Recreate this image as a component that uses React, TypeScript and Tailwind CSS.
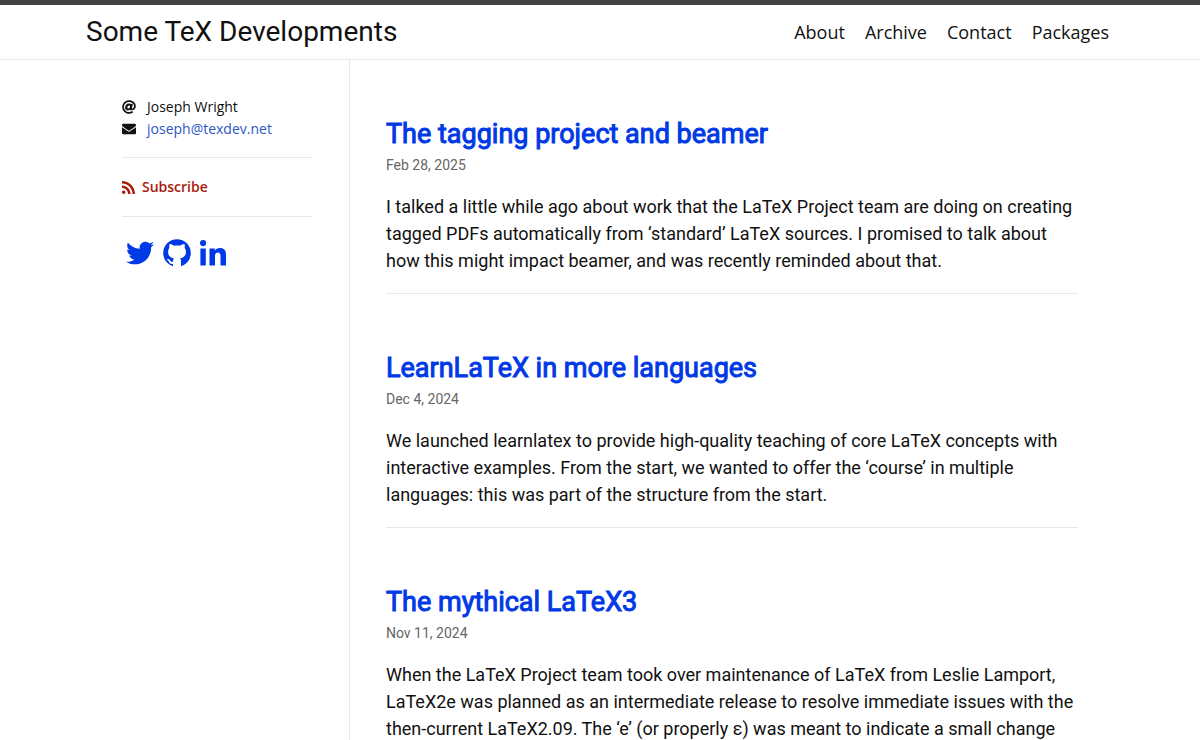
import { FaAt, FaEnvelope, FaTwitter } from 'react-icons/fa';
import { ImRss } from 'react-icons/im';

const navLinks = ['About', 'Archive', 'Contact', 'Packages'];

const posts = [
  {
    title: 'The tagging project and beamer',
    date: 'Feb 28, 2025',
    excerpt:
      'I talked a little while ago about work that the LaTeX Project team are doing on creating tagged PDFs automatically from ‘standard’ LaTeX sources. I promised to talk about how this might impact beamer, and was recently reminded about that.',
  },
  {
    title: 'LearnLaTeX in more languages',
    date: 'Dec 4, 2024',
    excerpt:
      'We launched learnlatex to provide high-quality teaching of core LaTeX concepts with interactive examples. From the start, we wanted to offer the ‘course’ in multiple languages: this was part of the structure from the start.',
  },
  {
    title: 'The mythical LaTeX3',
    date: 'Nov 11, 2024',
    excerpt:
      'When the LaTeX Project team took over maintenance of LaTeX from Leslie Lamport, LaTeX2e was planned as an intermediate release to resolve immediate issues with the then-current LaTeX2.09. The ‘e’ (or properly ε) was meant to indicate a small change',
  },
];

function GithubIcon() {
  return (
    <svg viewBox="0 0 28 28" className="size-7">
      <circle cx="14" cy="14" r="13.8" fill="currentColor" />
      <path
        fill="#fff"
        d="M6.6 5C8.5 4.8 10 6 11 6.8C13 6.3 15 6.3 17 6.8C18 6 19.5 4.8 21.4 5C22 6.5 21.9 7.8 21.6 8.8C22.5 10 22.9 11.3 22.9 12.8C22.9 17.3 20.2 18.9 17 19.3C17.8 20.2 18 21 18 22.3V28H10V25C7 25.5 6.2 23.5 5.5 22C5 21 3.9 20.7 4 20.2C5.5 19.5 6.8 20.8 7.5 21.9C8.2 23 9 23 10.1 22.6C10.2 21 10.3 20 11 19.3C7.8 18.9 5.1 17.3 5.1 12.8C5.1 11.3 5.5 10 6.4 8.8C6.1 7.8 6 6.5 6.6 5z"
      />
    </svg>
  );
}

function LinkedinIcon() {
  return (
    <svg viewBox="0 0 26 26" fill="currentColor" className="size-[26px]">
      <circle cx="3.1" cy="3.1" r="3.1" />
      <rect x="0.4" y="8.5" width="5.4" height="17" />
      <path d="M9.5 8.5h5.3v2.3c1-1.7 2.8-2.7 5.2-2.7 4 0 6 2.6 6 7v10.4h-5.5v-9.7c0-2-.8-3.3-2.6-3.3-1.9 0-2.9 1.4-2.9 3.4v9.6H9.5z" />
    </svg>
  );
}

function Header() {
  return (
    <header className="border-t-5 border-b border-t-[#424242] border-b-[#e8e8e8]">
      <div className="mx-auto flex h-[54px] max-w-[1028px] items-center justify-between">
        <a href="#" className="text-[28px] text-[#111]">Some TeX Developments</a>
        <nav className="flex gap-5 pr-[5px] font-['Open_Sans',sans-serif] text-lg text-[#111]">
          {navLinks.map((label) => (
            <a key={label} href="#">{label}</a>
          ))}
        </nav>
      </div>
    </header>
  );
}

function Sidebar() {
  return (
    <aside className="w-[264px] shrink-0 border-r border-[#e8e8e8] px-9 pt-9 font-['Open_Sans',sans-serif] text-sm">
      <ul className="leading-[22px]">
        <li className="flex items-center gap-[11px]">
          <FaAt className="size-3.5" />
          Joseph Wright
        </li>
        <li className="flex items-center gap-[11px]">
          <FaEnvelope className="size-3.5" />
          <a href="mailto:joseph@texdev.net" className="text-[#2a56c6]">joseph@texdev.net</a>
        </li>
      </ul>
      <hr className="my-[17px] border-[#e8e8e8]" />
      <a href="#" className="flex items-center gap-[7px] leading-6 font-semibold text-[#a91b0d]">
        <ImRss className="size-[13px]" />
        Subscribe
      </a>
      <hr className="my-[17px] border-[#e8e8e8]" />
      <div className="flex items-center gap-[9px] px-1 pt-[5px] text-[#0039e6]">
        <a href="#" aria-label="Twitter"><FaTwitter className="size-7" /></a>
        <a href="#" aria-label="GitHub"><GithubIcon /></a>
        <a href="#" aria-label="LinkedIn"><LinkedinIcon /></a>
      </div>
    </aside>
  );
}

export default function App() {
  return (
    <div className="h-screen overflow-hidden bg-white font-[Roboto,sans-serif] text-[#111]">
      <Header />
      <div className="mx-auto flex min-h-screen max-w-[1028px]">
        <Sidebar />
        <main className="min-w-0 flex-1 px-9">
          {posts.map((post) => (
            <article key={post.title} className="border-b border-[#e8e8e8] pt-[53px] pb-[19px]">
              <h2 className="text-[27px] leading-[42px] font-normal text-[#0039e6] [-webkit-text-stroke:1px]">
                <a href="#">{post.title}</a>
              </h2>
              <time className="block text-sm leading-5 text-[#666]">{post.date}</time>
              <p className="mt-[18px] text-lg leading-[27px]">{post.excerpt}</p>
            </article>
          ))}
        </main>
      </div>
    </div>
  );
}
